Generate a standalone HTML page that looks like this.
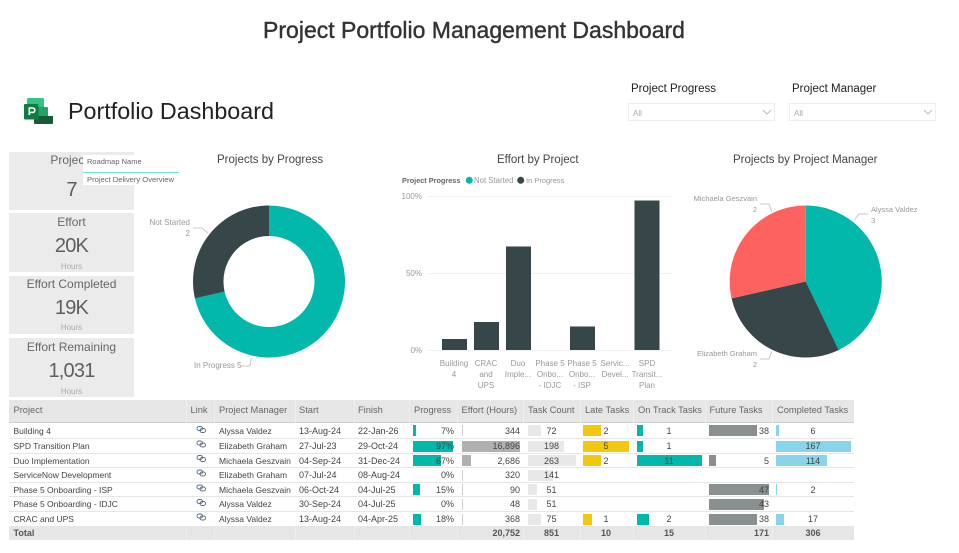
<!DOCTYPE html>
<html><head><meta charset="utf-8"><style>
html,body{margin:0;padding:0;background:#fff}
body{width:959px;height:553px;overflow:hidden;position:relative;font-family:"Liberation Sans",sans-serif}
.t{position:absolute;white-space:nowrap}
.card{position:absolute;left:9px;width:124.700px;background:#ebebeb;overflow:hidden;color:#666;text-align:center}
.card div{position:absolute;left:0;width:125px;white-space:nowrap}
.ct{font-size:12px;line-height:14px}
.cv{font-size:20px;line-height:24px;color:#5f5f5f;letter-spacing:-.8px}
.ch{font-size:8px;line-height:10px;color:#aaa;overflow:hidden}
.lb{font-size:8px;line-height:10px;color:#999}
.pl{font-size:7.500px}
.ax{font-size:8px;line-height:11px;color:#999;text-align:center;width:34px}
.title{font-size:11.500px;line-height:14px;color:#444}
.sl{position:absolute;top:103px;width:145px;height:16px;border:1px solid #eee;font-size:8px;line-height:19px;color:#aaa;text-indent:4px}
.tbl{position:absolute;left:9px;top:400px;width:845px;height:140px;font-size:9px;color:#444}
.row{position:absolute;left:0;width:845px;height:14.500px;line-height:14.500px;border-top:1px solid #e6e6e6;box-sizing:border-box}
.row span{position:absolute;white-space:nowrap}
.row span:nth-of-type(1),.row span:nth-of-type(2){font-size:8.500px}
.row i{position:absolute;top:1.500px;height:11px;display:block}
.hd{position:absolute;left:0;top:0;width:845px;height:23px;background:#e6e6e6;border-bottom:1px solid #ccc;box-sizing:border-box;line-height:20px;color:#666;font-size:9.300px}
.hd span{position:absolute;white-space:nowrap}
.tot{position:absolute;left:0;top:126px;width:845px;height:14px;background:#e6e6e6;line-height:15px;font-weight:bold;color:#555}
.tot span{position:absolute;white-space:nowrap}
.r{text-align:right}.m{text-align:center}
.p{background:#01b8aa}.e{background:#b0b0b0}.e0{background:#d0d0d0}.c{background:#e8e8e8}.y{background:#f2c80f}.f{background:#8a9090}.k{background:#8ad4eb}
</style></head><body>

<div class="t" style="left:0;width:948px;top:16px;text-align:center;font-size:23px;line-height:28px;color:#333;-webkit-text-stroke:.4px #333">Project Portfolio Management Dashboard</div>

<svg style="position:absolute;left:23px;top:97px" width="32" height="28" viewBox="0 0 32 28">
<path d="M4 2.500Q4 1 5.500 1H19.500Q21 1 21 2.500V19H4Z" fill="#33c481"/>
<path d="M15 10H24Q25 10 25 11V19H15Z" fill="#21a366"/>
<path d="M11 19H30V26Q30 27 29 27H12Q11 27 11 26Z" fill="#185c37"/>
<path d="M2 7H14.500Q15.500 7 15.500 8V21.500Q15.500 22.500 14.500 22.500H2Q1 22.500 1 21.500V8Q1 7 2 7Z" fill="#107c41"/>
<path d="M6.300 18V11H9.500Q11.800 11 11.800 13.200T9.500 15.400H6.300" fill="none" stroke="#fff" stroke-width="1.600"/>
</svg>
<div class="t" style="left:68px;top:96px;font-size:23.300px;line-height:30px;color:#222">Portfolio Dashboard</div>

<div class="t" style="left:631px;top:82px;font-size:11.500px;line-height:15px;color:#222">Project Progress</div>
<div class="t" style="left:792px;top:82px;font-size:11.500px;line-height:15px;color:#222">Project Manager</div>
<div class="sl" style="left:628px">All</div>
<div class="sl" style="left:789px">All</div>
<svg style="position:absolute;left:0;top:0" width="959" height="553" fill="none">
<path d="M763 110L767 114L771 110M924 110L928 114L932 110" stroke="#aaa" stroke-width=".8"/>
</svg>

<div class="card" style="top:152px;height:58px"><div class="ct" style="top:1px;left:.500px;width:125px">Projects</div><div class="cv" style="top:26px">7</div></div>
<div class="card" style="top:213px;height:59px"><div class="ct" style="top:2px">Effort</div><div class="cv" style="top:20.500px">20K</div><div class="ch" style="top:49px;height:7px">Hours</div></div>
<div class="card" style="top:276px;height:58px"><div class="ct" style="top:1px">Effort Completed</div><div class="cv" style="top:19.500px">19K</div><div class="ch" style="top:47px">Hours</div></div>
<div class="card" style="top:338px;height:59px"><div class="ct" style="top:2px">Effort Remaining</div><div class="cv" style="top:20.500px">1,031</div><div class="ch" style="top:49px;height:7px">Hours</div></div>

<div style="position:absolute;left:83px;top:155px;width:96px;height:30px;background:#fff"></div>
<div style="position:absolute;left:83px;top:172px;width:96px;height:1px;background:#6fdcd6"></div>
<div class="t" style="left:87px;top:156.500px;font-size:7.500px;line-height:10px;color:#666">Roadmap Name</div>
<div class="t" style="left:87px;top:174.500px;font-size:7.600px;line-height:10px;color:#666">Project Delivery Overview</div>

<div class="t title" style="left:217px;top:153px">Projects by Progress</div>
<div class="t title" style="left:497px;top:153px">Effort by Project</div>
<div class="t title" style="left:733px;top:153px">Projects by Project Manager</div>

<svg style="position:absolute;left:0;top:0" width="959" height="553">
<path d="M269 205.500A76 76 0 1 1 194.900 298.400L224.600 291.600A45.500 45.500 0 1 0 269 236Z" fill="#01b8aa"/>
<path d="M194.900 298.400A76 76 0 0 1 269 205.500L269 236A45.500 45.500 0 0 0 224.600 291.600Z" fill="#374649"/>
<path d="M193 228H202L208 233M241 366H250L251.300 358" fill="none" stroke="#bbb" stroke-width=".8"/>

<path d="M805.700 281.500V205.500A76 76 0 0 1 838.700 350Z" fill="#01b8aa"/>
<path d="M805.700 281.500L838.700 350A76 76 0 0 1 731.600 298.400Z" fill="#374649"/>
<path d="M805.700 281.500L731.600 298.400A76 76 0 0 1 805.700 205.500Z" fill="#fd625e"/>
<path d="M760 204H769L771.700 211.700M868 214H859L854.700 220M760 359H769L771.700 351.700" fill="none" stroke="#bbb" stroke-width=".8"/>

<path d="M428 196.500H673M428 273.500H673M428 350.500H673" stroke="#f0f0f0" stroke-width="1"/>
<g fill="#374649">
<rect x="442" y="339" width="25" height="11"/>
<rect x="474" y="322" width="25" height="28"/>
<rect x="506" y="246.500" width="25" height="103.500"/>
<rect x="570" y="326.500" width="25" height="23.500"/>
<rect x="634.500" y="200.500" width="25" height="149.500"/>
</g>
<circle cx="469.300" cy="180.300" r="3.500" fill="#01b8aa"/>
<circle cx="520.700" cy="180.300" r="3.500" fill="#374649"/>
</svg>

<div class="t lb" style="right:769px;top:218px">Not Started</div>
<div class="t lb" style="right:769px;top:229px">2</div>
<div class="t lb" style="left:194px;top:361px">In Progress 5</div>
<div class="t lb pl" style="right:202px;top:194px">Michaela Geszvain</div>
<div class="t lb pl" style="right:202px;top:205px">2</div>
<div class="t lb pl" style="left:871px;top:205px">Alyssa Valdez</div>
<div class="t lb pl" style="left:871px;top:216px">3</div>
<div class="t lb pl" style="right:202px;top:349px">Elizabeth Graham</div>
<div class="t lb pl" style="right:202px;top:360px">2</div>

<div class="t" style="left:402px;top:175.500px;font-size:7.300px;line-height:10px;font-weight:bold;color:#666">Project Progress</div>
<div class="t lb" style="left:474px;top:175.500px;font-size:7.800px">Not Started</div>
<div class="t lb" style="left:526px;top:175.500px;font-size:7.500px">In Progress</div>
<div class="t lb" style="right:537px;top:191.500px">100%</div>
<div class="t lb" style="right:537px;top:268.500px">50%</div>
<div class="t lb" style="right:537px;top:345.500px">0%</div>

<div class="t ax" style="left:437px;top:357.500px">Building<br>4</div>
<div class="t ax" style="left:469px;top:357.500px">CRAC<br>and<br>UPS</div>
<div class="t ax" style="left:501px;top:357.500px">Duo<br>Imple...</div>
<div class="t ax" style="left:533px;top:357.500px">Phase 5<br>Onbo...<br>- IDJC</div>
<div class="t ax" style="left:565px;top:357.500px">Phase 5<br>Onbo...<br>- ISP</div>
<div class="t ax" style="left:598px;top:357.500px">Servic...<br>Devel...</div>
<div class="t ax" style="left:630px;top:357.500px">SPD<br>Transit...<br>Plan</div>

<div class="tbl">
<div class="hd">
<span style="left:4.500px">Project</span><span style="left:181.500px">Link</span><span style="left:210px">Project Manager</span><span style="left:290px">Start</span><span style="left:349px">Finish</span><span style="left:405px">Progress</span><span style="left:452.500px">Effort (Hours)</span><span style="left:519px">Task Count</span><span style="left:576px">Late Tasks</span><span style="left:629px">On Track Tasks</span><span style="left:700.500px">Future Tasks</span><span style="left:768px">Completed Tasks</span>
</div>

<div class="row" style="top:23.500px;border-top:0">
<i class="p" style="left:404.300px;width:3px"></i><i class="e0" style="left:452.700px;width:1px"></i><i class="c" style="left:518.700px;width:13px"></i><i class="y" style="left:574.300px;width:18px"></i><i class="p" style="left:628.300px;width:5.500px"></i><i class="f" style="left:700.300px;width:48px"></i><i class="k" style="left:767.300px;width:2.500px"></i>
<span style="left:4.500px">Building 4</span><span style="left:210px">Alyssa Valdez</span><span style="left:290px">13-Aug-24</span><span style="left:349px">22-Jan-26</span><span class="r" style="right:400px">7%</span><span class="r" style="right:334px">344</span><span class="m" style="left:532px;width:21px">72</span><span class="m" style="left:587px;width:20px">2</span><span class="m" style="left:650px;width:20px">1</span><span class="r" style="right:85px">38</span><span class="m" style="left:784px;width:40px">6</span>
</div>

<div class="row" style="top:38px">
<i class="p" style="left:404.300px;width:40px"></i><i class="e" style="left:452.700px;width:58px"></i><i class="c" style="left:518.700px;width:36px"></i><i class="y" style="left:574.300px;width:46px"></i><i class="p" style="left:628.300px;width:5.500px"></i><i class="k" style="left:767.300px;width:74.500px"></i>
<span style="left:4.500px">SPD Transition Plan</span><span style="left:210px">Elizabeth Graham</span><span style="left:290px">27-Jul-23</span><span style="left:349px">29-Oct-24</span><span class="r" style="right:400px">97%</span><span class="r" style="right:334px">16,896</span><span class="m" style="left:532px;width:21px">198</span><span class="m" style="left:587px;width:20px">5</span><span class="m" style="left:650px;width:20px">1</span><span class="m" style="left:784px;width:40px">167</span>
</div>

<div class="row" style="top:52.500px">
<i class="p" style="left:404.300px;width:28px"></i><i class="e" style="left:452.700px;width:9px"></i><i class="c" style="left:518.700px;width:48px"></i><i class="y" style="left:574.300px;width:18px"></i><i class="p" style="left:628.300px;width:65px"></i><i class="f" style="left:700.300px;width:6.500px"></i><i class="k" style="left:767.300px;width:50.500px"></i>
<span style="left:4.500px">Duo Implementation</span><span style="left:210px">Michaela Geszvain</span><span style="left:290px">04-Sep-24</span><span style="left:349px">31-Dec-24</span><span class="r" style="right:400px">67%</span><span class="r" style="right:334px">2,686</span><span class="m" style="left:532px;width:21px">263</span><span class="m" style="left:587px;width:20px">2</span><span class="m" style="left:650px;width:20px">11</span><span class="r" style="right:85px">5</span><span class="m" style="left:784px;width:40px">114</span>
</div>

<div class="row" style="top:67px">
<i class="e0" style="left:452.700px;width:1px"></i><i class="c" style="left:518.700px;width:25px"></i>
<span style="left:4.500px">ServiceNow Development</span><span style="left:210px">Elizabeth Graham</span><span style="left:290px">07-Jul-24</span><span style="left:349px">08-Aug-24</span><span class="r" style="right:400px">0%</span><span class="r" style="right:334px">320</span><span class="m" style="left:532px;width:21px">141</span>
</div>

<div class="row" style="top:81.800px">
<i class="p" style="left:404.300px;width:6.500px"></i><i class="e0" style="left:452.700px;width:1px"></i><i class="c" style="left:518.700px;width:9px"></i><i class="f" style="left:700.300px;width:59.500px"></i><i class="k" style="left:767.300px;width:1px"></i>
<span style="left:4.500px">Phase 5 Onboarding - ISP</span><span style="left:210px">Michaela Geszvain</span><span style="left:290px">06-Oct-24</span><span style="left:349px">04-Jul-25</span><span class="r" style="right:400px">15%</span><span class="r" style="right:334px">90</span><span class="m" style="left:532px;width:21px">51</span><span class="r" style="right:85px">47</span><span class="m" style="left:784px;width:40px">2</span>
</div>

<div class="row" style="top:96.300px">
<i class="e0" style="left:452.700px;width:1px"></i><i class="c" style="left:518.700px;width:9px"></i><i class="f" style="left:700.300px;width:54.500px"></i>
<span style="left:4.500px">Phase 5 Onboarding - IDJC</span><span style="left:210px">Alyssa Valdez</span><span style="left:290px">30-Sep-24</span><span style="left:349px">04-Jul-25</span><span class="r" style="right:400px">0%</span><span class="r" style="right:334px">48</span><span class="m" style="left:532px;width:21px">51</span><span class="r" style="right:85px">43</span>
</div>

<div class="row" style="top:111px">
<i class="p" style="left:404.300px;width:7.500px"></i><i class="e0" style="left:452.700px;width:1px"></i><i class="c" style="left:518.700px;width:13.500px"></i><i class="y" style="left:574.300px;width:8.500px"></i><i class="p" style="left:628.300px;width:11.700px"></i><i class="f" style="left:700.300px;width:48px"></i><i class="k" style="left:767.300px;width:7.500px"></i>
<span style="left:4.500px">CRAC and UPS</span><span style="left:210px">Alyssa Valdez</span><span style="left:290px">13-Aug-24</span><span style="left:349px">04-Apr-25</span><span class="r" style="right:400px">18%</span><span class="r" style="right:334px">368</span><span class="m" style="left:532px;width:21px">75</span><span class="m" style="left:587px;width:20px">1</span><span class="m" style="left:650px;width:20px">2</span><span class="r" style="right:85px">38</span><span class="m" style="left:784px;width:40px">17</span>
</div>

<div class="tot">
<span style="left:4.500px">Total</span><span class="r" style="right:334px">20,752</span><span class="m" style="left:532px;width:21px">851</span><span class="m" style="left:587px;width:20px">10</span><span class="m" style="left:650px;width:20px">15</span><span class="r" style="right:85px">171</span><span class="m" style="left:784px;width:40px">306</span>
</div>
</div>

<svg style="position:absolute;left:0;top:0" width="959" height="553" fill="none">
<path d="M186.500 400V423M214.500 400V423M295.500 400V423M354.500 400V423M409.500 400V423M457.500 400V423M523.500 400V423M580.500 400V423M633.500 400V423M705.500 400V423M772.500 400V423M186.500 526V540M214.500 526V540M295.500 526V540M354.500 526V540M409.500 526V540M457.500 526V540M523.500 526V540M580.500 526V540M633.500 526V540M705.500 526V540M772.500 526V540" stroke="#eeeeee" stroke-width="1"/>
<g stroke="#5b6b80" stroke-width=".9">
<rect x="197" y="426.500" width="5.500" height="4" rx="2"/><rect x="200" y="428.500" width="5.500" height="4" rx="2"/>
<rect x="197" y="441" width="5.500" height="4" rx="2"/><rect x="200" y="443" width="5.500" height="4" rx="2"/>
<rect x="197" y="455.500" width="5.500" height="4" rx="2"/><rect x="200" y="457.500" width="5.500" height="4" rx="2"/>
<rect x="197" y="470" width="5.500" height="4" rx="2"/><rect x="200" y="472" width="5.500" height="4" rx="2"/>
<rect x="197" y="485" width="5.500" height="4" rx="2"/><rect x="200" y="487" width="5.500" height="4" rx="2"/>
<rect x="197" y="499.500" width="5.500" height="4" rx="2"/><rect x="200" y="501.500" width="5.500" height="4" rx="2"/>
<rect x="197" y="514" width="5.500" height="4" rx="2"/><rect x="200" y="516" width="5.500" height="4" rx="2"/>
</g>
</svg>
</body></html>
